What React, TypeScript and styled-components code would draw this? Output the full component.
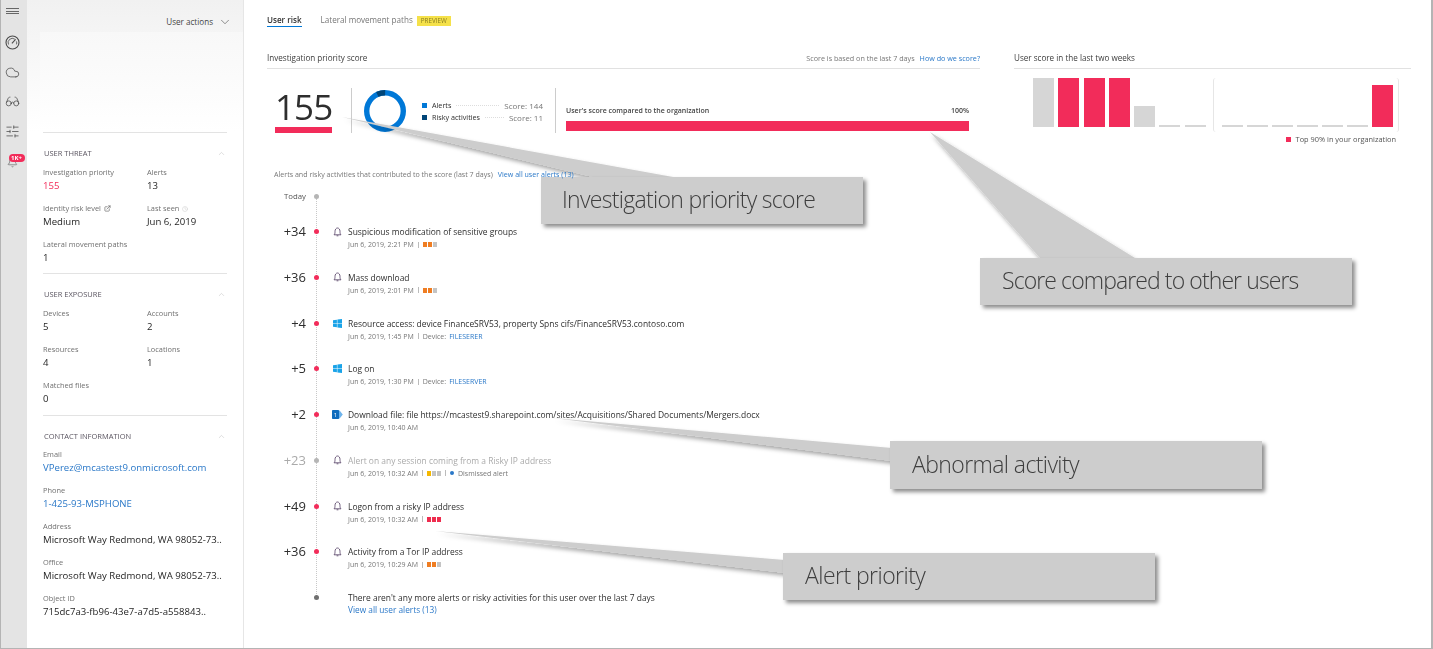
import React from "react";
import styled, { createGlobalStyle } from "styled-components";
import { Cloud, Glasses, SlidersHorizontal, Bell, ChevronDown, ChevronUp, ExternalLink, Clock } from "lucide-react";

const Global = createGlobalStyle`
  html, body { margin: 0; padding: 0; background: #fff; }
  * { box-sizing: border-box; }
  body { font-family: "Open Sans", "Noto Sans", sans-serif; color: #333; overflow: hidden; }
`;
const Page = styled.div`
  position: relative; width: 1433px; height: 649px; display: flex; overflow: hidden;
  border-left: 1px solid #b4b4b4; border-right: 2px solid #b4b4b4; border-bottom: 1px solid #b4b4b4;
  filter: blur(0.3px);
`;
const Rail = styled.nav`
  width: 26px; flex: none; background: #e4e4e4; display: flex; flex-direction: column; align-items: center;
  padding: 5px 3px 0 0; color: #4a4a4a;
`;
const RailItem = styled.div`
  position: relative; height: 29.5px; width: 16px; display: flex; align-items: center; justify-content: center;
`;
const Burger = styled.div`
  width: 13px; height: 6px; margin: 3px 0 14px; border-top: 1px solid #666; border-bottom: 1px solid #666; position: relative;
  &::after { content: ""; position: absolute; left: 0; right: 0; top: 1.5px; height: 1px; background: #666; }
`;
const BellIcon = styled(Bell)` margin-top: 4px; `;
const Badge = styled.span`
  position: absolute; left: 4px; top: 8px; height: 8px; width: 16px; border-radius: 4px; background: #f22c5a; color: #fff;
  font-size: 6px; font-weight: 700; line-height: 8px; text-align: center;
`;
const Sidebar = styled.aside`
  width: 217px; flex: none; border-right: 1px solid #e6e6e6; display: flex; flex-direction: column;
`;
const SideTop = styled.div`
  height: 132px; background: linear-gradient(#f1f1f1, #fbfbfb 70%, #fff); display: flex; flex-direction: column;
`;
const Actions = styled.div`
  height: 32px; display: flex; align-items: center; justify-content: flex-end; gap: 5px; padding: 11px 11px 0 0; font-size: 8.1px; color: #444;
`;
const Persona = styled.div`
  flex: 1; margin-left: 13px; background: linear-gradient(#f8f8f8, #fcfcfc 60%, #fff);
`;
const Section = styled.section`
  margin: 0 16px; border-top: 1px solid #e3e3e3; padding-top: 14px; height: ${p => p.$h}px;
`;
const SectionHead = styled.div`
  display: flex; justify-content: space-between; align-items: center; height: 12px; padding-left: 1px; margin-bottom: ${p => p.$gap}px;
  font-size: 7.5px; color: #5a5560; svg { margin-right: 1px; color: #aaa; }
`;
const Fields = styled.div`
  display: grid; grid-template-columns: 104px 1fr; grid-auto-rows: 36px;
`;
const Field = styled.div` grid-column: ${p => (p.$wide ? "1 / 3" : "auto")}; white-space: nowrap; `;
const Label = styled.div`
  font-size: 7.4px; line-height: 13px; color: #707070; display: flex; align-items: center; gap: 3px; svg { color: #555; }
`;
const FaintClock = styled(Clock)` color: #ccc !important; `;
const Value = styled.div`
  font-size: 9.6px; line-height: 13px; color: ${p => p.$color || "#1f1f1f"}; font-weight: ${p => (p.$color ? 400 : 500)};
`;
const Main = styled.main`
  flex: 1; min-width: 0; padding: 14px 20px 0 23px; position: relative;
`;
const Tabs = styled.div`
  display: flex; align-items: flex-start; height: 14px; margin-bottom: 23px; font-size: 8.1px; line-height: 12px;
`;
const Tab = styled.div`
  color: ${p => (p.$active ? "#333" : "#777")}; font-weight: ${p => (p.$active ? 600 : 400)};
  ${p => p.$active && "border-bottom: 1px solid #0078d7; height: 13px; margin-right: 19px;"}
`;
const Preview = styled.span`
  margin: 2px 0 0 4px; width: 34px; height: 10px; background: #f5e14a; color: #8a7d20; font-size: 6.3px; line-height: 10px; text-align: center;
`;
const Columns = styled.div` display: flex; gap: 34px; `;
const LeftCol = styled.div` width: 713px; flex: none; `;
const RightCol = styled.div` flex: 1; `;
const TitleRow = styled.div`
  height: 18px; border-bottom: 1px solid #e1e1e1; display: flex; justify-content: space-between; align-items: center;
  padding-bottom: 4px; font-size: 8.1px; color: #3c3c3c; font-weight: 500;
`;
const Note = styled.div` font-size: 7.2px; font-weight: 400; color: #777; display: flex; gap: 5px; `;
const Link = styled.a` color: #2a78c8; position: relative; z-index: 2; `;
const ScoreRow = styled.div` display: flex; height: 45px; margin-top: 19px; `;
const BigScore = styled.div`
  width: 85px; border-right: 1px solid #ccc; padding-left: 8px; display: flex; flex-direction: column;
`;
const BigNum = styled.div` font-size: 35px; line-height: 37px; height: 39px; color: #2e2e2e; letter-spacing: -0.9px; font-weight: 500; `;
const BigBar = styled.div` width: 57px; height: 6px; background: #f22c5a; `;
const DonutBlock = styled.div`
  width: 204px; border-right: 1px solid #ccc; display: flex; align-items: center; padding-left: 12px; gap: 16px;
`;
const LegendList = styled.div` width: 121px; display: flex; flex-direction: column; gap: 0; margin-top: 1px; `;
const LegendRow = styled.div`
  display: flex; align-items: center; height: 12px; font-size: 7.2px; font-weight: 500; color: #2e2e2e;
`;
const Swatch = styled.i` width: 5px; height: 5px; background: ${p => p.$c}; margin-right: 5px; flex: none; `;
const Leader = styled.span` flex: 1; border-top: 1px dotted #ddd; margin: 0 5px; `;
const ScoreText = styled.span` font-weight: 400; color: #777; font-size: 8px; `;
const Compare = styled.div` margin: 0 0 0 10px; width: 403px; padding-top: 17px; `;
const CompareHead = styled.div`
  display: flex; justify-content: space-between; font-size: 7px; line-height: 11px; height: 16px; font-weight: 600; color: #444;
`;
const CompareBar = styled.div` height: 10px; background: #f22c5a; `;
const Caption = styled.div`
  margin: 35px 0 10px 7px; font-size: 7.1px; line-height: 12px; color: #777; display: flex; gap: 5px; white-space: nowrap;
`;
const Timeline = styled.div`
  position: relative; width: 713px;
  &::before { content: ""; position: absolute; left: 48.5px; top: 7px; height: 401px; border-left: 1px dotted #c8c8c8; }
`;
const Row = styled.div`
  display: grid; grid-template-columns: 39px 20px 22px 1fr; height: ${p => p.$h || 45.75}px; position: relative;
  white-space: nowrap;
`;
const Points = styled.div`
  font-size: 13px; line-height: 13px; text-align: right; color: ${p => (p.$muted ? "#aaa" : "#2e2e2e")};
`;
const TodayLabel = styled.div` font-size: 7.8px; line-height: 13px; text-align: right; color: #555; `;
const DotCell = styled.div` height: 13px; display: flex; align-items: center; justify-content: center; `;
const Dot = styled.i` width: 5px; height: 5px; border-radius: 50%; background: ${p => p.$c}; `;
const IconCell = styled.div` height: 13px; display: flex; align-items: center; justify-content: center; `;
const EvTitle = styled.div`
  font-size: 8.45px; line-height: 13px; font-weight: 500; color: ${p => (p.$muted ? "#aaa" : "#2e2e2e")};
`;
const EvMeta = styled.div`
  font-size: 7px; line-height: 13px; color: #777; display: flex; align-items: center; gap: 3px;
`;
const AllAlerts = styled.div` font-size: 8.3px; line-height: 11px; `;
const Sep = styled.i` width: 1px; height: 6px; background: #bbb; margin: 0 1px; `;
const Sev = styled.span` display: inline-flex; gap: 1px; `;
const SevBox = styled.i` width: 4px; height: 5px; background: ${p => p.$c}; `;
const Blue = styled.span` color: #2a78c8; `;
const BlueDot = styled.i` width: 4px; height: 4px; border-radius: 50%; background: #2a78c8; margin-right: 1px; `;
const ChartRow = styled.div` display: flex; margin: 9px 0 0 19px; gap: 5px; `;
const Bars = styled.div` display: flex; align-items: flex-end; height: 49px; gap: ${p => p.$gap}px; `;
const Bracket = styled.div`
  width: 186px; height: 54px; padding-left: 8px; margin-left: 2px; border: 1px solid #e6e6e6; border-width: 0 1px; border-radius: 3px;
`;
const Bar = styled.i` display: block; width: 21px; flex: none; height: ${p => p.$h}px; background: ${p => p.$c}; `;
const ChartLegend = styled.div`
  margin: 2px 15px 0 0; display: flex; justify-content: flex-end; align-items: center; gap: 5px; font-size: 7.4px; line-height: 11px; font-weight: 500; color: #555;
`;
const Square = styled.i` width: 5px; height: 5px; background: #f22c5a; `;
const Overlay = styled.svg` position: absolute; left: -1px; top: 0; pointer-events: none; z-index: 1; `;
const Callout = styled.div`
  position: absolute; z-index: 1; left: ${p => p.$x}px; top: ${p => p.$y}px; width: ${p => p.$w}px; height: ${p => p.$h}px;
  padding: 0 0 3px ${p => p.$pad}px; background: #cdcdcd; box-shadow: 3px 3px 4px rgba(0,0,0,.45);
  display: flex; align-items: center; font-size: 23px; font-weight: 300; color: #3e3e3e; letter-spacing: ${p => p.$ls}px; white-space: nowrap;
`;

const GaugeIcon = () => (
  <svg width="15" height="15" viewBox="0 0 15 15" fill="none" stroke="currentColor" strokeWidth="1.1">
    <circle cx="7.5" cy="7.5" r="6.5" />
    <path d="M3.5 9.5a4.3 4.3 0 0 1 6.3-5.4" strokeWidth=".8" />
    <path d="M6.9 8.3 10.6 4.3" />
    <path d="M11.4 6.4a4.3 4.3 0 0 1 .1 3" strokeWidth=".8" />
  </svg>
);
const Win = () => (
  <svg width="9" height="9" viewBox="0 0 9 9"><path fill="#1aa3e8" d="M0 1.3 3.9.7v3.5H0zM4.4.6 9 0v4.2H4.4zM0 4.8h3.9v3.5L0 7.7zM4.4 4.8H9V9l-4.6-.6z"/></svg>
);
const AlertBell = () => (
  <svg width="9" height="10" viewBox="0 0 9 10" fill="none" stroke="#5f4b6e" strokeWidth=".9"><path d="M1 7.8c.8-.7 1-1.6 1-3.3C2 2.6 3 1 4.5 1S7 2.6 7 4.5c0 1.7.2 2.6 1 3.3z"/><path d="M3.6 8.8h1.8"/></svg>
);
const Share = () => (
  <svg width="11" height="9" viewBox="0 0 11 9"><path d="M6 .6h1.6L10.8 4.5 7.6 8.4H6z" fill="#6fb4ec"/><rect y="0" width="7" height="9" rx=".8" fill="#0f6cbd"/><text x="3.5" y="6.8" fontSize="6" fill="#fff" textAnchor="middle" fontFamily="Open Sans">1</text></svg>
);
const O = "#ef7d22", G = "#c4c4c4", Y = "#f5b800", R = "#ee2c4e";
type Ev = { pts: string; icon: "bell" | "win" | "sp"; title: string; date: string; sev?: string[]; device?: string; muted?: boolean; dismissed?: boolean };
const events: Ev[] = [
  { pts: "+34", icon: "bell", title: "Suspicious modification of sensitive groups", date: "Jun 6, 2019, 2:21 PM", sev: [O, O, G] },
  { pts: "+36", icon: "bell", title: "Mass download", date: "Jun 6, 2019, 2:01 PM", sev: [O, O, G] },
  { pts: "+4", icon: "win", title: "Resource access: device FinanceSRV53, property Spns cifs/FinanceSRV53.contoso.com", date: "Jun 6, 2019, 1:45 PM", device: "FILESERER" },
  { pts: "+5", icon: "win", title: "Log on", date: "Jun 6, 2019, 1:30 PM", device: "FILESERVER" },
  { pts: "+2", icon: "sp", title: "Download file: file https://mcastest9.sharepoint.com/sites/Acquisitions/Shared Documents/Mergers.docx", date: "Jun 6, 2019, 10:40 AM" },
  { pts: "+23", icon: "bell", title: "Alert on any session coming from a Risky IP address", date: "Jun 6, 2019, 10:32 AM", sev: [Y, G, G], muted: true, dismissed: true },
  { pts: "+49", icon: "bell", title: "Logon from a risky IP address", date: "Jun 6, 2019, 10:32 AM", sev: [R, R, R] },
  { pts: "+36", icon: "bell", title: "Activity from a Tor IP address", date: "Jun 6, 2019, 10:29 AM", sev: [O, O, G] },
];
const P = "#f22c5a", L = "#d6d6d6";
const week1: [number, string][] = [[49, L], [49, P], [49, P], [49, P], [21, L], [2, L], [2, L]];
const week2: [number, string][] = [[2, L], [2, L], [2, L], [2, L], [2, L], [2, L], [42, P]];

export default function App() {
  return (
    <Page>
      <Global />
      <Rail>
        <Burger />
        <RailItem><GaugeIcon /></RailItem>
        <RailItem><Cloud size={15} strokeWidth={1.2} /></RailItem>
        <RailItem><Glasses size={15} strokeWidth={1.2} /></RailItem>
        <RailItem><SlidersHorizontal size={15} strokeWidth={1.2} /></RailItem>
        <RailItem><BellIcon size={11} strokeWidth={1.2} /><Badge>1K+</Badge></RailItem>
      </Rail>
      <Sidebar>
        <SideTop>
          <Actions>User actions <ChevronDown size={14} strokeWidth={1} /></Actions>
          <Persona />
        </SideTop>
        <Section $h={141}>
          <SectionHead $gap={7}>USER THREAT <ChevronUp size={9} strokeWidth={1} /></SectionHead>
          <Fields>
            <Field><Label>Investigation priority</Label><Value $color="#f22c5a">155</Value></Field>
            <Field><Label>Alerts</Label><Value>13</Value></Field>
            <Field><Label>Identity risk level <ExternalLink size={7} /></Label><Value>Medium</Value></Field>
            <Field><Label>Last seen <FaintClock size={6} /></Label><Value>Jun 6, 2019</Value></Field>
            <Field $wide><Label>Lateral movement paths</Label><Value>1</Value></Field>
          </Fields>
        </Section>
        <Section $h={142}>
          <SectionHead $gap={7}>USER EXPOSURE <ChevronUp size={9} strokeWidth={1} /></SectionHead>
          <Fields>
            <Field><Label>Devices</Label><Value>5</Value></Field>
            <Field><Label>Accounts</Label><Value>2</Value></Field>
            <Field><Label>Resources</Label><Value>4</Value></Field>
            <Field><Label>Locations</Label><Value>1</Value></Field>
            <Field $wide><Label>Matched files</Label><Value>0</Value></Field>
          </Fields>
        </Section>
        <Section $h={230}>
          <SectionHead $gap={6}>CONTACT INFORMATION <ChevronUp size={9} strokeWidth={1} /></SectionHead>
          <Fields>
            <Field $wide><Label>Email</Label><Value $color="#2a78c8">VPerez@mcastest9.onmicrosoft.com</Value></Field>
            <Field $wide><Label>Phone</Label><Value $color="#2a78c8">1-425-93-MSPHONE</Value></Field>
            <Field $wide><Label>Address</Label><Value>Microsoft Way Redmond, WA 98052-73..</Value></Field>
            <Field $wide><Label>Office</Label><Value>Microsoft Way Redmond, WA 98052-73..</Value></Field>
            <Field $wide><Label>Object ID</Label><Value>715dc7a3-fb96-43e7-a7d5-a558843..</Value></Field>
          </Fields>
        </Section>
      </Sidebar>
      <Main>
        <Tabs>
          <Tab $active>User risk</Tab>
          <Tab>Lateral movement paths</Tab>
          <Preview>PREVIEW</Preview>
        </Tabs>
        <Columns>
          <LeftCol>
            <TitleRow>
              Investigation priority score
              <Note>Score is based on the last 7 days <Link>How do we score?</Link></Note>
            </TitleRow>
            <ScoreRow>
              <BigScore><BigNum>155</BigNum><BigBar /></BigScore>
              <DonutBlock>
                <svg width="42" height="42" viewBox="0 0 42 42">
                  <circle cx="21" cy="21" r="18.3" fill="none" stroke="#0078d7" strokeWidth="5.4" />
                  <circle cx="21" cy="21" r="18.3" fill="none" stroke="#004578" strokeWidth="5.4" pathLength="155" strokeDasharray="11 144" transform="rotate(-115 21 21)" />
                </svg>
                <LegendList>
                  <LegendRow><Swatch $c="#0078d7" />Alerts<Leader /><ScoreText>Score: 144</ScoreText></LegendRow>
                  <LegendRow><Swatch $c="#004578" />Risky activities<Leader /><ScoreText>Score: 11</ScoreText></LegendRow>
                </LegendList>
              </DonutBlock>
              <Compare>
                <CompareHead><span>User's score compared to the organization</span><span>100%</span></CompareHead>
                <CompareBar />
              </Compare>
            </ScoreRow>
            <Caption>Alerts and risky activities that contributed to the score (last 7 days) <Link>View all user alerts (13)</Link></Caption>
            <Timeline>
              <Row $h={35}>
                <TodayLabel>Today</TodayLabel>
                <DotCell><Dot $c="#b5b5b5" /></DotCell>
              </Row>
              {events.map(e => (
                <Row key={e.title}>
                  <Points $muted={e.muted}>{e.pts}</Points>
                  <DotCell><Dot $c={e.muted ? "#b5b5b5" : "#f22c5a"} /></DotCell>
                  <IconCell>{e.icon === "bell" ? <AlertBell /> : e.icon === "win" ? <Win /> : <Share />}</IconCell>
                  <div>
                    <EvTitle $muted={e.muted}>{e.title}</EvTitle>
                    <EvMeta>
                      {e.date}
                      {(e.sev || e.device) && <Sep />}
                      {e.sev && <Sev>{e.sev.map((c, i) => <SevBox key={i} $c={c} />)}</Sev>}
                      {e.device && <>Device: <Blue>{e.device}</Blue></>}
                      {e.dismissed && <><Sep /><BlueDot />Dismissed alert</>}
                    </EvMeta>
                  </div>
                </Row>
              ))}
              <Row>
                <span />
                <DotCell><Dot $c="#707070" /></DotCell>
                <span />
                <div>
                  <EvTitle>There aren't any more alerts or risky activities for this user over the last 7 days</EvTitle>
                  <AllAlerts><Link>View all user alerts (13)</Link></AllAlerts>
                </div>
              </Row>
            </Timeline>
          </LeftCol>
          <RightCol>
            <TitleRow>User score in the last two weeks</TitleRow>
            <ChartRow>
              <Bars $gap={4.3}>{week1.map(([h, c], i) => <Bar key={i} $h={h} $c={c} />)}</Bars>
              <Bracket><Bars $gap={4}>{week2.map(([h, c], i) => <Bar key={i} $h={h} $c={c} />)}</Bars></Bracket>
            </ChartRow>
            <ChartLegend><Square />Top 90% in your organization</ChartLegend>
          </RightCol>
        </Columns>
      </Main>
      <Overlay width="1433" height="649" viewBox="0 0 1433 649">
        <defs>
          <filter id="s" x="-10%" y="-10%" width="120%" height="130%"><feDropShadow dx="2" dy="3" stdDeviation="2" floodColor="#000" floodOpacity=".35" /></filter>
        </defs>
        <polygon points="342,117 593,177 673,177" fill="#cdcdcd" filter="url(#s)" />
        <polygon points="930,132 1040,258 1135,258" fill="#cdcdcd" filter="url(#s)" />
        <polygon points="553,418 892,448 892,461" fill="#cdcdcd" filter="url(#s)" />
        <polygon points="435,531 785,560 785,573" fill="#cdcdcd" filter="url(#s)" />
      </Overlay>
      <Callout $x={540} $y={177} $w={322} $h={47} $pad={21} $ls={-0.7}>Investigation priority score</Callout>
      <Callout $x={979} $y={258} $w={372} $h={47} $pad={22} $ls={-0.9}>Score compared to other users</Callout>
      <Callout $x={889} $y={441} $w={372} $h={48} $pad={22} $ls={-0.6}>Abnormal activity</Callout>
      <Callout $x={782} $y={553} $w={372} $h={47} $pad={22} $ls={-0.55}>Alert priority</Callout>
    </Page>
  );
}
